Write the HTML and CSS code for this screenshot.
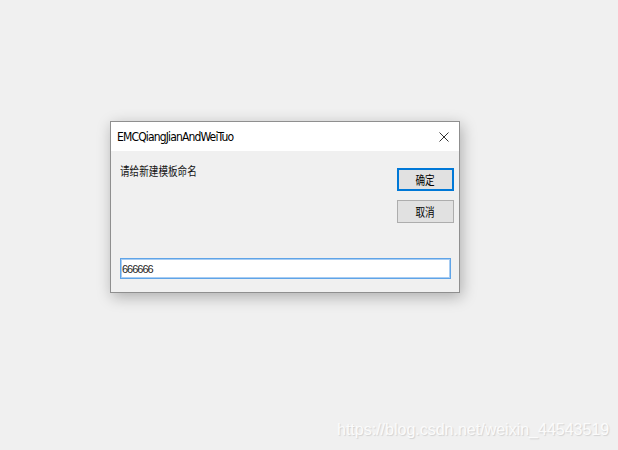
FILE: index.html
```html
<!DOCTYPE html>
<html lang="zh-CN">
<head>
    <meta charset="UTF-8">
    <title>EMCQiangJianAndWeiTuo</title>
    <link rel="stylesheet" href="styles.css">
</head>
<body>
    <div class="dialog">
        <div class="titlebar">
            <span class="title">EMCQiangJianAndWeiTuo</span>
            <svg class="close" width="10" height="10" viewBox="0 0 10 10">
                <path d="M0.5 0.5 L9.5 9.5 M9.5 0.5 L0.5 9.5" stroke="#333" stroke-width="1" fill="none"/>
            </svg>
        </div>
        <div class="content">
            <div class="top">
                <span class="label cjk">请给新建模板命名</span>
                <div class="buttons">
                    <button class="btn btn-default"><span class="cjk">确定</span></button>
                    <button class="btn"><span class="cjk">取消</span></button>
                </div>
            </div>
            <input class="name" type="text" value="666666">
        </div>
    </div>

    <div class="watermark">https://blog.csdn.net/weixin_44543519</div>
</body>
</html>
```

FILE: styles.css
```css
body {
    margin: 0;
    height: 450px;
    overflow: hidden;
    background-color: #f0f0f0;
    font-family: "DejaVu Sans Condensed", "Liberation Sans", sans-serif;
    color: #000;
}
.dialog {
    margin: 121px 0 0 110px;
    width: 350px;
    box-sizing: border-box;
    border: 1px solid #8f8f8f;
    background-color: #f0f0f0;
    box-shadow: 2px 4px 14px rgba(0, 0, 0, 0.28);
}
.titlebar {
    height: 29px;
    background-color: #fff;
    display: flex;
    align-items: center;
    justify-content: space-between;
    padding: 0 10px 0 6px;
}
.title {
    font-size: 12px;
    letter-spacing: -0.85px;
    color: #000;
}
.close {
    display: block;
}
.content {
    padding: 12px 5px 13px 9px;
}
.top {
    height: 95px;
    display: flex;
    justify-content: space-between;
    align-items: flex-start;
}
.cjk {
    display: inline-block;
    font-family: "Noto Sans CJK SC", sans-serif;
    font-size: 12px;
    line-height: 14px;
    transform: scaleX(0.8);
    transform-origin: left center;
}
.label {
    margin-top: 1px;
    color: #111;
}
.buttons {
    margin-top: 5px;
    width: 57px;
    display: flex;
    flex-direction: column;
    gap: 9px;
}
.btn {
    height: 23px;
    padding: 0;
    margin: 0;
    border: 1px solid #adadad;
    background-color: #e1e1e1;
    font: inherit;
}
.btn .cjk {
    transform-origin: center;
}
.btn-default {
    border: 2px solid #0078d7;
}
.name {
    display: block;
    width: 331px;
    height: 21px;
    box-sizing: border-box;
    margin: 0;
    padding: 0 1px;
    border: 1px solid #5fa4e8;
    box-shadow: inset 0 0 0 1px #a9cdf2;
    background-color: #fff;
    font-family: "Liberation Sans", sans-serif;
    font-size: 11px;
    letter-spacing: -1px;
    color: #222;
    outline: none;
}
.watermark {
    position: absolute;
    left: 337px;
    top: 421px;
    font-family: "Liberation Sans", Arial, sans-serif;
    font-size: 16px;
    color: #fbfbfb;
    text-shadow: 1px 1px 1px #d2d2d2;
}
```
